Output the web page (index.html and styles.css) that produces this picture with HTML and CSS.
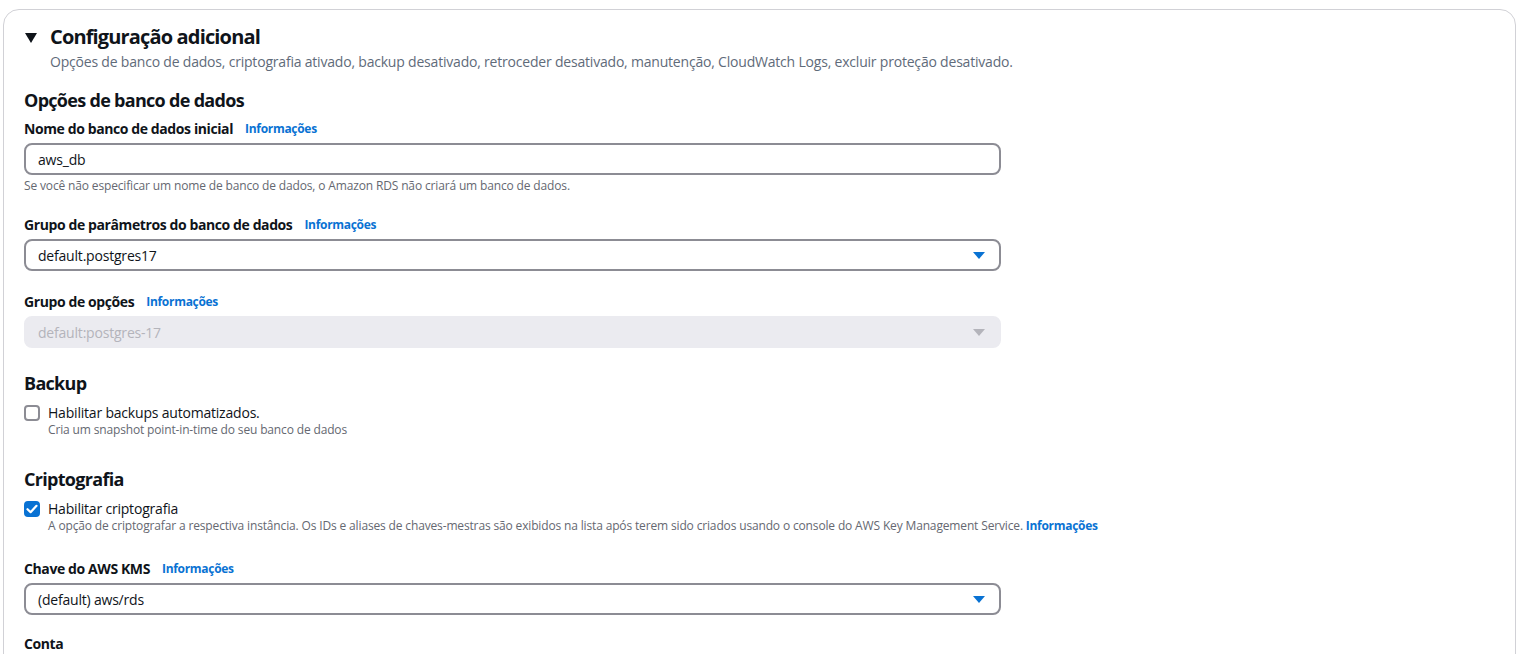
FILE: index.html
```html
<!DOCTYPE html>
<html lang="pt-BR">
<head>
<meta charset="utf-8">
<title>Configuração adicional</title>
<link rel="stylesheet" href="styles.css">
</head>
<body>
<section class="card">
  <div class="card-header">
    <svg class="caret" width="12" height="10" viewBox="0 0 12 10"><path d="M0 0H12L6 10Z" fill="#0f141a"/></svg>
    <h1 class="card-title">Configuração adicional</h1>
  </div>
  <p class="card-desc">Opções de banco de dados, criptografia ativado, backup desativado, retroceder desativado, manutenção, CloudWatch Logs, excluir proteção desativado.</p>

  <div class="form">
    <h2 class="section-title first">Opções de banco de dados</h2>

    <div class="field">
      <div class="label-row"><span class="label">Nome do banco de dados inicial</span><a class="info">Informações</a></div>
      <div class="input"><span>aws_db</span></div>
      <p class="help">Se você não especificar um nome de banco de dados, o Amazon RDS não criará um banco de dados.</p>
    </div>

    <div class="field">
      <div class="label-row"><span class="label">Grupo de parâmetros do banco de dados</span><a class="info">Informações</a></div>
      <div class="input select"><span>default.postgres17</span><svg class="arrow" width="12" height="7" viewBox="0 0 12 7"><path d="M0 0H12L6 7Z" fill="#0972d3"/></svg></div>
    </div>

    <div class="field">
      <div class="label-row"><span class="label">Grupo de opções</span><a class="info">Informações</a></div>
      <div class="input select disabled"><span>default:postgres-17</span><svg class="arrow" width="12" height="7" viewBox="0 0 12 7"><path d="M0 0H12L6 7Z" fill="#b4b4bb"/></svg></div>
    </div>

    <h2 class="section-title">Backup</h2>
    <div class="check">
      <span class="box"></span>
      <div class="check-text">
        <div class="check-label">Habilitar backups automatizados.</div>
        <div class="check-desc">Cria um snapshot point-in-time do seu banco de dados</div>
      </div>
    </div>

    <h2 class="section-title crypto">Criptografia</h2>
    <div class="check">
      <span class="box checked"><svg width="12" height="10" viewBox="0 0 12 10"><path d="M1.5 5.2L4.6 8.2L10.5 1.8" fill="none" stroke="#fff" stroke-width="2.2" stroke-linecap="round" stroke-linejoin="round"/></svg></span>
      <div class="check-text">
        <div class="check-label">Habilitar criptografia</div>
        <div class="check-desc">A opção de criptografar a respectiva instância. Os IDs e aliases de chaves-mestras são exibidos na lista após terem sido criados usando o console do AWS Key Management Service. <a class="info inline">Informações</a></div>
      </div>
    </div>

    <div class="field kms">
      <div class="label-row"><span class="label">Chave do AWS KMS</span><a class="info">Informações</a></div>
      <div class="input select"><span>(default) aws/rds</span><svg class="arrow" width="12" height="7" viewBox="0 0 12 7"><path d="M0 0H12L6 7Z" fill="#0972d3"/></svg></div>
    </div>

    <div class="field last">
      <div class="label-row"><span class="label">Conta</span></div>
    </div>
  </div>
</section>
</body>
</html>
```

FILE: styles.css
```css
* { box-sizing: border-box; }
html, body { margin: 0; padding: 0; background: #fff; }
body {
  font-family: "Open Sans", "Noto Sans", Arial, sans-serif;
  color: #0f141a;
  overflow: hidden;
  height: 654px;
}
.card {
  margin: 9px 1px 0 3px;
  border: 1px solid #d1d1d6;
  border-radius: 16px;
  padding: 15px 20px 40px 20px;
  height: 700px;
}
.card-header {
  display: flex;
  align-items: center;
  gap: 13px;
  height: 24px;
}
.caret { margin-left: 1px; margin-top: 1px; }
.card-title {
  margin: 0;
  font-size: 20px;
  line-height: 24px;
  font-weight: 700;
  letter-spacing: -0.85px;
}
.card-desc {
  margin: 3px 0 0 26px;
  font-size: 14px;
  line-height: 20px;
  color: #5f6b7a;
  letter-spacing: -0.2px;
}
.section-title {
  margin: 24px 0 0 0;
  font-size: 18px;
  line-height: 22px;
  font-weight: 700;
  letter-spacing: -0.7px;
}
.section-title.first { margin-top: 17px; }
.section-title.crypto { margin-top: 30px; }
.field { margin-top: 22px; width: 977px; }
.section-title + .field { margin-top: 9px; }
.field.kms { margin-top: 26px; }
.field.last { margin-top: 20px; }
.label-row {
  display: flex;
  align-items: center;
  gap: 12px;
  height: 18px;
}
.label {
  font-size: 14px;
  line-height: 18px;
  font-weight: 700;
  letter-spacing: -0.4px;
}
.info {
  font-size: 12px;
  line-height: 16px;
  font-weight: 700;
  color: #0972d3;
  letter-spacing: -0.3px;
}
.input {
  margin-top: 5px;
  height: 32px;
  border: 2px solid #8c8c94;
  border-radius: 8px;
  padding: 0 12px;
  display: flex;
  align-items: center;
  justify-content: space-between;
  font-size: 14px;
  color: #0f141a;
  letter-spacing: -0.2px;
}
.input.disabled {
  background: #ebebf0;
  border-color: #ebebf0;
  color: #b4b4bb;
}
.arrow { margin-right: 2px; }
.help {
  margin: 3px 0 0 0;
  font-size: 12px;
  line-height: 16px;
  color: #656871;
  letter-spacing: -0.15px;
}
.check {
  display: flex;
  gap: 8px;
  margin-top: 10px;
}
.box {
  width: 16px;
  height: 16px;
  margin-top: 1px;
  border: 2px solid #8c8c94;
  border-radius: 4px;
  flex: none;
  display: flex;
  align-items: center;
  justify-content: center;
}
.box.checked {
  background: #0972d3;
  border-color: #0972d3;
}
.check-label {
  font-size: 14px;
  line-height: 18px;
  letter-spacing: -0.2px;
}
.check-desc {
  font-size: 12px;
  line-height: 16px;
  color: #656871;
  letter-spacing: -0.15px;
  white-space: nowrap;
}
.info.inline { font-size: 12px; letter-spacing: -0.3px; }
```
